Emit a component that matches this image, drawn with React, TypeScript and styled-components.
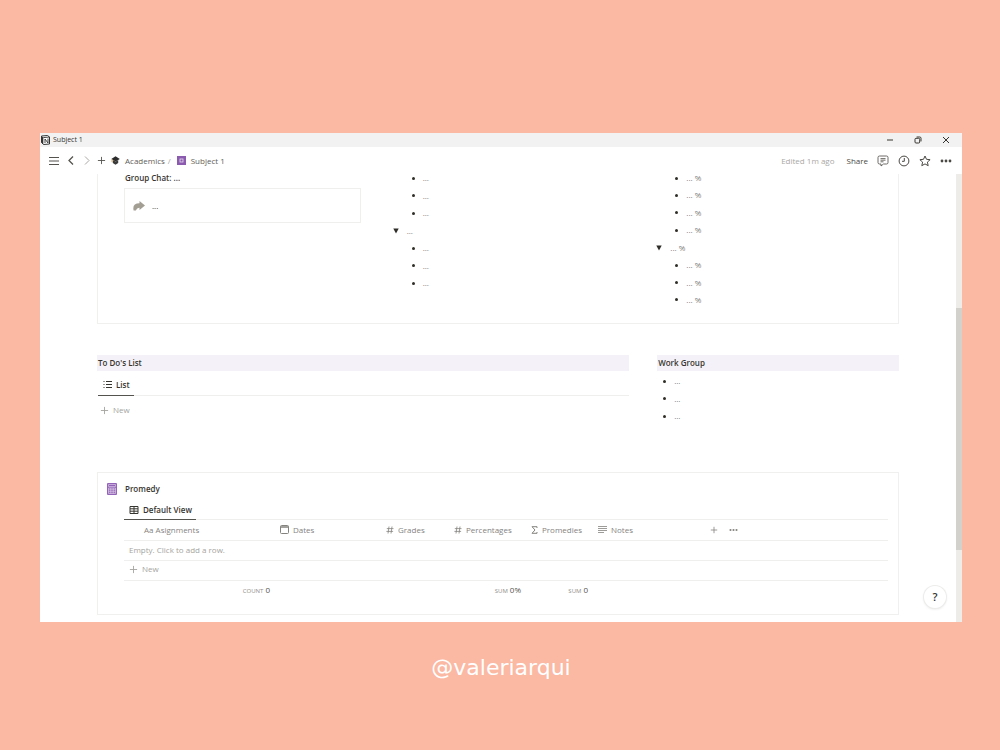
import React from 'react';
import styled, { createGlobalStyle } from 'styled-components';

const Global = createGlobalStyle`
  * { box-sizing: border-box; }
  body {
    margin: 0;
    background: #fbb8a3;
    color: #37352f;
    font-family: "Open Sans", "Noto Sans", sans-serif;
    font-size: 8px;
    line-height: 12px;
  }
  button {
    display: inline-flex;
    align-items: center;
    margin: 0;
    padding: 0;
    border: 0;
    background: none;
    color: inherit;
    font: inherit;
    cursor: pointer;
  }
  h2, ul, p { margin: 0; padding: 0; font-size: inherit; font-weight: inherit; }
  ul { list-style: none; }
  svg { display: block; flex: none; }
`;

const Page = styled.main`
  padding: 133px 38px 0 40px;
`;

const AppWindow = styled.section`
  position: relative;
  background: #fff;
`;

const TitleBar = styled.header`
  display: flex;
  align-items: center;
  gap: 3px;
  height: 14px;
  padding: 0 12px 0 1px;
  background: #f2f2f2;
  font-size: 7px;
`;

const WindowButtons = styled.div`
  display: flex;
  gap: 20px;
  margin-left: auto;
`;

const Toolbar = styled.nav`
  display: flex;
  align-items: center;
  height: 27px;
  padding: 0 10px 0 9px;
`;

const NavButtons = styled.div`
  display: flex;
  align-items: center;
  gap: 6px;
  margin-right: 5px;
  color: #55534e;

  > :first-child { margin-right: 2px; }
`;

const Crumb = styled.a`
  display: flex;
  align-items: center;
  gap: 5px;
  color: #5f5d58;
  text-decoration: none;
`;

const Slash = styled.span`
  margin: 0 6px 0 3px;
  color: #a5a4a0;
`;

const Actions = styled.div`
  display: flex;
  align-items: center;
  gap: 9px;
  margin-left: auto;
  color: #4a4843;
`;

const Edited = styled.span`
  margin-right: 3px;
  color: #a9a8a5;
`;

const Viewport = styled.div`
  display: flex;
`;

const Content = styled.div`
  flex: 1;
  min-width: 0;
  padding: 0 57px 7px;
`;

const Scrollbar = styled.div`
  display: flex;
  flex-direction: column;
  width: 6px;
  background: #edece9;
`;

const Track = styled.div<{ $share: number; $thumb?: boolean }>`
  flex: ${(p) => p.$share};
  background: ${(p) => (p.$thumb ? '#d3d1cb' : 'transparent')};
`;

const Card = styled.section<{ $open?: boolean }>`
  border: 1px solid #f0f0ef;
  border-top-width: ${(p) => (p.$open ? '0' : '1px')};
  padding: 0 10px 0 26px;
`;

const Columns = styled.div`
  display: grid;
  grid-template-columns: repeat(3, minmax(0, 1fr));
  gap: 27px;
  padding-bottom: 19px;
`;

const GroupChat = styled.p`
  height: 14px;
  line-height: 8px;
  padding-left: 1px;
  font-weight: 600;
`;

const Callout = styled.div`
  display: flex;
  align-items: center;
  gap: 7px;
  height: 35px;
  padding-left: 8px;
  border: 1px solid #efefee;
`;

const Outline = styled.ul<{ $height: number }>`
  display: flex;
  flex-direction: column;
  justify-content: space-between;
  height: ${(p) => p.$height}px;
  color: #7d7b77;
  line-height: 8px;
`;

const WorkList = styled.div`
  padding-top: 6px;
`;

const Item = styled.li<{ $toggle?: boolean; $inset?: number }>`
  display: flex;
  align-items: center;
  gap: 8px;
  height: 8px;
  padding-left: ${(p) => (p.$toggle ? '5px' : `${p.$inset ?? 24}px`)};
`;

const Dot = styled.span`
  width: 3px;
  height: 3px;
  border-radius: 50%;
  background: #2f2d28;
`;

const Split = styled.div`
  display: grid;
  grid-template-columns: 11fr 5fr;
  gap: 28px;
  margin: 31px 0 45px;
`;

const Block = styled.section`
  min-height: 72px;
`;

const Heading = styled.h2`
  height: 16px;
  padding-left: 1px;
  background: #f4f2f8;
  font-weight: 600;
  line-height: 16px;
`;

const Tabs = styled.div<{ $height: number }>`
  display: flex;
  align-items: stretch;
  height: ${(p) => p.$height}px;
  border-bottom: 1px solid #efefee;
`;

const Tab = styled.button`
  && {
    gap: 4px;
    margin-bottom: -1px;
    padding: 3px 4px 0 5px;
    border-bottom: 1px solid #55534e;
    font-weight: 600;
  }
`;

const NewButton = styled.button`
  && {
    gap: 4px;
    color: #a5a4a0;
  }
`;

const TodoBody = styled.div`
  padding: 8px 0 0 3px;
`;

const TodoTabs = styled.div`
  margin-left: 1px;
`;

const DbHeader = styled.div`
  display: flex;
  align-items: center;
  gap: 8px;
  height: 17px;
  margin: 7px 0 0 -17px;
  font-weight: 600;
`;

const DbBody = styled.div`
  padding-bottom: 14px;
`;

const Table = styled.table`
  width: 100%;
  border-collapse: collapse;
  table-layout: fixed;
  color: #85837f;

  tr { height: 20px; }
  th, td { padding: 0 5px; font-weight: 400; text-align: left; }
  thead th, tbody td { border-bottom: 1px solid #efefee; }
  tfoot td { padding-top: 0; text-align: right; }
`;

const Col = styled.col<{ $w?: number }>`
  width: ${(p) => (p.$w ? `${p.$w}px` : 'auto')};
`;

const ColName = styled.span<{ $inset?: number }>`
  display: flex;
  align-items: center;
  gap: 4px;
  padding-left: ${(p) => p.$inset ?? 0}px;
  white-space: nowrap;
`;

const ColTools = styled.div`
  display: flex;
  align-items: center;
  gap: 11px;
`;

const Empty = styled.td`
  color: #a5a4a0;
`;

const Calc = styled.span`
  color: #55534e;
  small { margin-right: 2px; color: #8f8d89; font-size: 6px; }
`;

const Help = styled.button`
  && {
    position: absolute;
    right: 16px;
    bottom: 14px;
    justify-content: center;
    width: 22px;
    height: 22px;
    border-radius: 50%;
    background: #fff;
    box-shadow: 0 0 0 1px #ececeb, 0 1px 3px #0000001f;
    font-size: 11px;
    font-weight: 600;
  }
`;

const Handle = styled.footer`
  padding-top: 31px;
  color: #fff;
  font-family: "DejaVu Sans", sans-serif;
  font-size: 22px;
  line-height: 30px;
  text-align: center;
`;

type IconProps = { w?: number; h?: number; box?: string; sw?: number; children: React.ReactNode };
const Icon = ({ w = 11, h = w, box = '0 0 12 12', sw = 1, children }: IconProps) => (
  <svg width={w} height={h} viewBox={box} fill="none" stroke="currentColor" strokeWidth={sw} aria-hidden="true">
    {children}
  </svg>
);

const Plus = ({ size = 9 }: { size?: number }) => (
  <Icon w={size} box="0 0 10 10"><path d="M5 1v8M1 5h8" /></Icon>
);
const Dots = ({ w = 12 }: { w?: number }) => (
  <Icon w={w} h={4} box="0 0 12 4">
    <g fill="currentColor" stroke="none"><circle cx="2" cy="2" r="1.4" /><circle cx="6" cy="2" r="1.4" /><circle cx="10" cy="2" r="1.4" /></g>
  </Icon>
);
const Triangle = () => (
  <Icon w={6} h={6} box="0 0 6 6"><path d="M.3.5h5.4L3 5.6z" fill="#2f2d28" stroke="none" /></Icon>
);
const Hash = () => <Icon w={8} box="0 0 8 8" sw={0.8}><path d="M3 .5 2 7.5M6 .5 5 7.5M.8 2.6h6.7M.4 5.4h6.7" /></Icon>;

const Bullets = ({ texts, inset }: { texts: string[]; inset?: number }) => (
  <>{texts.map((t, i) => <Item key={i} $inset={inset}><Dot />{t}</Item>)}</>
);

const Toggle = ({ text }: { text: string }) => (
  <Item $toggle><button aria-label="Collapse"><Triangle /></button>{text}</Item>
);

export default function App() {
  return (
    <Page>
      <Global />
      <AppWindow>
        <TitleBar>
          <svg width="9" height="10" viewBox="0 0 9 10" aria-hidden="true">
            <path d="M.5 1 6.5.5 8.5 2v7l-6 .5L.5 7.5z" fill="#fff" stroke="#333" />
            <path d="M.5 1 2.3 2.6v6.8L.5 7.5z" fill="#333" />
            <path d="M2.3 2.6 8.5 2M4 8V4l3 4V3.5" fill="none" stroke="#333" strokeWidth=".9" />
          </svg>
          <span>Subject 1</span>
          <WindowButtons>
            <button aria-label="Minimize"><Icon w={8} box="0 0 8 8"><path d="M1 4h6" /></Icon></button>
            <button aria-label="Restore"><Icon w={8} box="0 0 8 8"><rect x="1" y="2.3" width="4.7" height="4.7" rx="1" /><path d="M2.6 1h3.2Q7 1 7 2.2v3.2" /></Icon></button>
            <button aria-label="Close"><Icon w={8} box="0 0 8 8"><path d="m1 1 6 6M7 1 1 7" /></Icon></button>
          </WindowButtons>
        </TitleBar>

        <Toolbar aria-label="Breadcrumb">
          <NavButtons>
            <button aria-label="Menu"><Icon w={10} box="0 0 10 10"><path d="M0 1.5h10M0 5h10M0 8.5h10" /></Icon></button>
            <button aria-label="Back"><Icon w={9} box="0 0 9 9" sw={1.3}><path d="M6 .5 2 4.5l4 4" /></Icon></button>
            <button aria-label="Forward"><Icon w={9} box="0 0 9 9"><path d="m3 .5 4 4-4 4" stroke="#aaa8a4" /></Icon></button>
            <button aria-label="New page"><Plus /></button>
          </NavButtons>
          <Crumb href="#academics">
            <svg width="9" height="9" viewBox="0 0 9 9" aria-hidden="true">
              <path d="M4.5.3 8.8 3 4.6 5.4.3 3z" fill="#2b2b2b" />
              <path d="M1.8 4v3l2.7 1.8L7.2 7V4L4.6 5.6z" fill="#3a3a3a" />
              <path d="M1 3.4v2.8" stroke="#e0a040" strokeWidth=".8" />
            </svg>
            Academics
          </Crumb>
          <Slash>/</Slash>
          <Crumb href="#subject-1">
            <svg width="9" height="9" viewBox="0 0 9 9" aria-hidden="true">
              <rect width="9" height="9" fill="#8a5bae" />
              <rect x="3" y="3" width="3" height="3" fill="none" stroke="#e9dff0" strokeWidth=".8" />
            </svg>
            Subject 1
          </Crumb>
          <Actions>
            <Edited>Edited 1m ago</Edited>
            <button>Share</button>
            <button aria-label="Comments"><Icon w={12}><path d="M2.5 1h7Q11 1 11 2.5v5Q11 9 9.5 9h-3L4 11V9H2.5Q1 9 1 7.500v-5Q1 1 2.500 1zM3.500 3.600h5M3.500 5.200h5M3.500 6.800h3" strokeWidth=".8" /></Icon></button>
            <button aria-label="Updates"><Icon w={12}><circle cx="6" cy="6" r="4.900" /><path d="M6.300 3v3.300H4" /></Icon></button>
            <button aria-label="Favorite"><Icon w={12}><path d="m6 1 1.500 3.300 3.600.4-2.700 2.400.8 3.600L6 8.900l-3.200 1.800.8-3.600L.9 4.700l3.600-.4z" /></Icon></button>
            <button aria-label="More"><Dots /></button>
          </Actions>
        </Toolbar>

        <Viewport>
          <Content>
            <Card $open>
              <Columns>
                <div>
                  <GroupChat>Group Chat: ...</GroupChat>
                  <Callout>
                    <svg width="12" height="10" viewBox="0 0 12 10" aria-hidden="true">
                      <path d="M6.500 0 12 4.500 6.500 9V6.700Q4 6.500 2.800 9.500H.6Q-1 2.300 6.500 2.200z" fill="#a39e93" />
                    </svg>
                    ...
                  </Callout>
                </div>
                <Outline $height={113}>
                  <Bullets texts={['...', '...', '...']} />
                  <Toggle text="..." />
                  <Bullets texts={['...', '...', '...']} />
                </Outline>
                <Outline $height={130}>
                  <Bullets texts={['... %', '... %', '... %', '... %']} />
                  <Toggle text="... %" />
                  <Bullets texts={['... %', '... %', '... %']} />
                </Outline>
              </Columns>
            </Card>

            <Split>
              <Block>
                <Heading>To Do's List</Heading>
                <TodoTabs>
                  <Tabs $height={25}>
                    <Tab>
                      <Icon w={9} box="0 0 9 9"><path d="M3 1.500h6M3 4.500h6M3 7.500h6M.5 1.500h1M.5 4.500h1M.5 7.500h1" /></Icon>
                      List
                    </Tab>
                  </Tabs>
                </TodoTabs>
                <TodoBody><NewButton><Plus />New</NewButton></TodoBody>
              </Block>
              <Block>
                <Heading>Work Group</Heading>
                <WorkList>
                  <Outline $height={43}>
                    <Bullets texts={['...', '...', '...']} inset={6} />
                  </Outline>
                </WorkList>
              </Block>
            </Split>

            <Card>
              <DbHeader>
                <svg width="10" height="12" viewBox="0 0 10 12" aria-hidden="true">
                  <rect width="10" height="12" rx="1" fill="#9263b8" />
                  <path d="M1.500 1.500h7v2h-7zM1.500 5h7v5.500h-7zM3.800 5v5.500M6.200 5v5.500M1.500 6.800h7M1.500 8.700h7" fill="none" stroke="#e6d9ef" strokeWidth=".6" />
                </svg>
                <h2>Promedy</h2>
              </DbHeader>
              <DbBody>
                <Tabs $height={23}>
                  <Tab>
                    <Icon w={10} box="0 0 10 10"><path d="M1 1.500h8v7H1zM1 3.800h8M1 6.200h8M5 1.500v7" /></Icon>
                    Default View
                  </Tab>
                </Tabs>
                <Table>
                  <colgroup>
                    <Col $w={151} /><Col $w={106} /><Col $w={68} /><Col $w={77} /><Col $w={67} /><Col $w={112} /><Col />
                  </colgroup>
                  <thead>
                    <tr>
                      <th><ColName $inset={15}>Aa Asignments</ColName></th>
                      <th><ColName><Icon w={9} box="0 0 9 9"><rect x=".5" y=".5" width="8" height="8" rx="1" /><path d="M.5 2h8" strokeWidth="1.500" /></Icon>Dates</ColName></th>
                      <th><ColName><Hash />Grades</ColName></th>
                      <th><ColName><Hash />Percentages</ColName></th>
                      <th><ColName><Icon w={7} h={8} box="0 0 7 8"><path d="M6 2V.7H1L4 4 1 7.300h5V6" /></Icon>Promedies</ColName></th>
                      <th><ColName><Icon w={9} box="0 0 9 9"><path d="M0 1.500h9M0 3.500h9M0 5.500h9M0 7.500h6" strokeWidth=".8" /></Icon>Notes</ColName></th>
                      <th>
                        <ColTools>
                          <button aria-label="Add column"><Plus size={8} /></button>
                          <button aria-label="Table options"><Dots w={9} /></button>
                        </ColTools>
                      </th>
                    </tr>
                  </thead>
                  <tbody>
                    <tr><Empty colSpan={7}>Empty. Click to add a row.</Empty></tr>
                    <tr><td colSpan={7}><NewButton><Plus />New</NewButton></td></tr>
                  </tbody>
                  <tfoot>
                    <tr>
                      <td><Calc><small>COUNT</small>0</Calc></td>
                      <td /><td />
                      <td><Calc><small>SUM</small>0%</Calc></td>
                      <td><Calc><small>SUM</small>0</Calc></td>
                      <td /><td />
                    </tr>
                  </tfoot>
                </Table>
              </DbBody>
            </Card>
          </Content>
          <Scrollbar>
            <Track $share={134} />
            <Track $share={242} $thumb />
            <Track $share={72} />
          </Scrollbar>
        </Viewport>
        <Help aria-label="Help">?</Help>
      </AppWindow>
      <Handle>@valeriarqui</Handle>
    </Page>
  );
}
